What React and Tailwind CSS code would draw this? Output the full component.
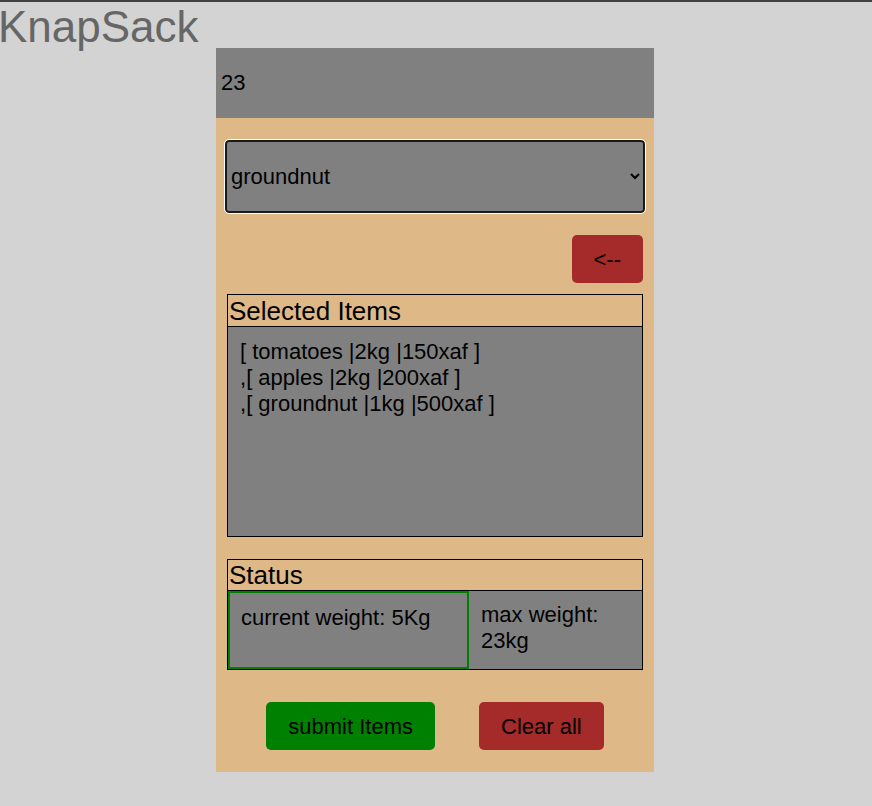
import { useState } from "react";

const items = [
  { name: "tomatoes", weight: 2, price: 150 },
  { name: "apples", weight: 2, price: 200 },
  { name: "groundnut", weight: 1, price: 500 },
];

export default function App() {
  const [choice, setChoice] = useState("groundnut");

  return (
    <div
      className="min-h-[806px] border-t-2 border-[#404040] bg-[#d3d3d3] text-black"
      style={{ fontFamily: '"Liberation Sans", Arial, sans-serif' }}
    >
      <h1 className="-ml-[2px] h-[46px] text-[44px] leading-[50px] text-[#666666]">KnapSack</h1>

      <div className="ml-[216px] w-[438px] bg-[#deb887]">
        <input
          type="text"
          defaultValue="23"
          className="block h-[70px] w-full bg-[#808080] px-[5px] text-[22px] outline-none"
        />

        <div className="px-[9px] pt-[22px] pb-[22px]">
          <select
            value={choice}
            onChange={(e) => setChoice(e.target.value)}
            className="block h-[73px] w-full rounded-[4px] border-2 border-[#1a1a1a] bg-[#808080] pl-0 pr-[6px] text-[22px] outline outline-1 outline-white"
          >
            <option value="tomatoes">tomatoes</option>
            <option value="apples">apples</option>
            <option value="groundnut">groundnut</option>
          </select>

          <div className="mt-[22px] flex justify-end pr-[2px]">
            <button className="h-[48px] rounded-[5px] bg-[#a52a2a] px-[22px] text-[22px]">
              &lt;--
            </button>
          </div>

          <div className="mx-[2px] mt-[11px] border border-black">
            <div className="h-[32px] border-b border-black px-[1px] text-[26px] leading-[32px]">
              Selected Items
            </div>
            <div className="h-[209px] bg-[#808080] px-[12px] pt-[12px] text-[22px] leading-[26px]">
              {items.map((it, i) => (
                <div key={it.name}>
                  {i > 0 ? "," : ""}[ {it.name} |{it.weight}kg |{it.price}xaf ]
                </div>
              ))}
            </div>
          </div>

          <div className="mx-[2px] mt-[22px] border border-black">
            <div className="h-[31px] border-b border-black px-[1px] text-[26px] leading-[31px]">
              Status
            </div>
            <div className="flex h-[78px]">
              <div className="w-[241px] border-2 border-[#008000] bg-[#808080] px-[11px] pt-[12px] text-[22px] leading-[26px]">
                current weight: 5Kg
              </div>
              <div className="flex-1 bg-[#808080] px-[12px] pt-[11px] text-[22px] leading-[26px]">
                max weight: 23kg
              </div>
            </div>
          </div>

          <div className="mt-[32px] flex justify-center gap-[44px]">
            <button className="h-[48px] rounded-[5px] bg-[#008000] px-[22px] text-[22px]">
              submit Items
            </button>
            <button className="h-[48px] rounded-[5px] bg-[#a52a2a] px-[22px] text-[22px]">
              Clear all
            </button>
          </div>
        </div>
      </div>
    </div>
  );
}
